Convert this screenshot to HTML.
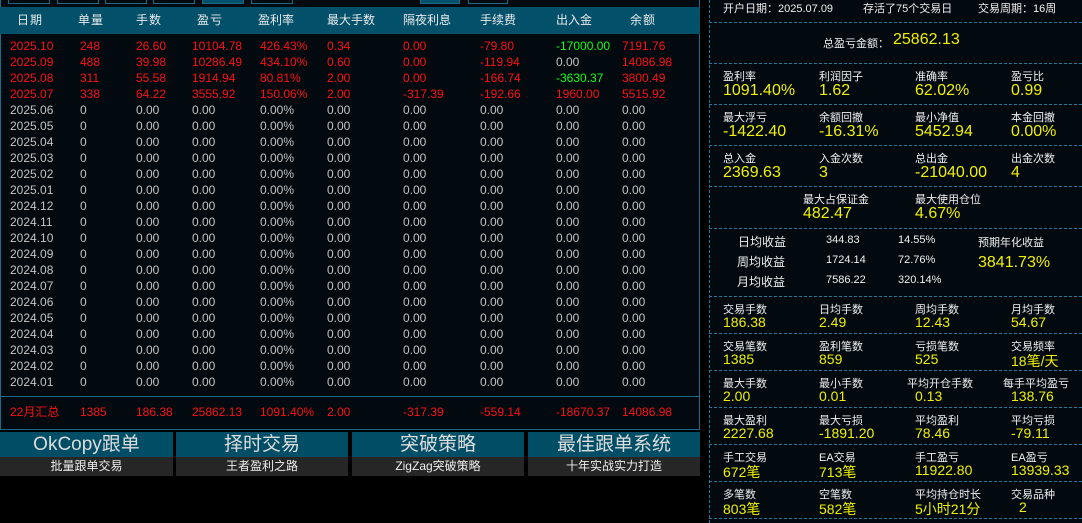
<!DOCTYPE html>
<html><head><meta charset="utf-8"><style>
*{margin:0;padding:0;box-sizing:border-box}
body{width:1082px;height:523px;background:#000;position:relative;overflow:hidden;font-family:"Liberation Sans","Noto Sans CJK SC",sans-serif;}
.a{position:absolute;white-space:nowrap}
#lp{position:absolute;left:0;top:0;width:700px;height:430px;background:#020a10;border:1px solid #1a6b88;border-top:none}
#hd{position:absolute;left:0;top:7px;width:700px;height:27px;background:#03506b}
.h{position:absolute;top:11px;font-size:12px;color:#eaeaea;letter-spacing:1px}
.r{position:absolute;font-size:12px;line-height:16px;height:16px;width:700px;left:0}
.r span{position:absolute;top:0}
.red{color:#ff1010}.gray{color:#c4c4c4}.grn{color:#10ff10}
.c1{left:10px}.c2{left:80px}.c3{left:136px}.c4{left:192px}.c5{left:260px}.c6{left:327px}.c7{left:403px}.c8{left:480px}.c9{left:556px}.c10{left:622px}
.btn{position:absolute;top:432px;width:173px;height:44px}
.bt{height:25px;background:#004d66;color:#ddd;font-size:19px;text-align:center;line-height:25px}
.bb{height:19px;background:#262626;color:#eee;font-size:12px;text-align:center;line-height:19px}
#rp{position:absolute;left:709px;top:0;width:373px;height:523px;background:#020a10;border-left:1px dashed #1d7a9a}
.dl{position:absolute;left:709px;width:373px;border-top:1px dashed #1d7a9a;height:0}
.lb{position:absolute;font-size:11px;color:#f0f0f0}
.vl{position:absolute;font-size:16px;color:#f0f000}
.sm{position:absolute;font-size:12px;color:#f0f0f0}
.bx{position:absolute;top:0;width:42px;height:4px;border:1px solid #1a6b88;border-top:none}
</style></head><body>
<div id="lp"></div>
<div class="bx" style="left:8px"></div>
<div class="bx" style="left:57px"></div>
<div class="bx" style="left:105px"></div>
<div class="bx" style="left:153px"></div>
<div class="bx" style="left:202px;background:#03506b"></div>
<div class="bx" style="left:251px"></div>
<div class="bx" style="left:420px;width:40px;background:#03506b"></div>
<div class="bx" style="left:468px;width:40px"></div>
<div id="hd"></div>
<div class="h" style="left:17px">日期</div><div class="h" style="left:78px">单量</div><div class="h" style="left:136px">手数</div><div class="h" style="left:197px">盈亏</div><div class="h" style="left:258px;letter-spacing:0">盈利率</div><div class="h" style="left:327px;letter-spacing:0">最大手数</div><div class="h" style="left:403px;letter-spacing:0">隔夜利息</div><div class="h" style="left:480px;letter-spacing:0">手续费</div><div class="h" style="left:556px;letter-spacing:0">出入金</div><div class="h" style="left:630px">余额</div>

<div class="r red" style="top:38px"><span class="c1">2025.10</span><span class="c2">248</span><span class="c3">26.60</span><span class="c4">10104.78</span><span class="c5">426.43%</span><span class="c6">0.34</span><span class="c7">0.00</span><span class="c8">-79.80</span><span class="c9 grn">-17000.00</span><span class="c10">7191.76</span></div>
<div class="r red" style="top:54px"><span class="c1">2025.09</span><span class="c2">488</span><span class="c3">39.98</span><span class="c4">10286.49</span><span class="c5">434.10%</span><span class="c6">0.60</span><span class="c7">0.00</span><span class="c8">-119.94</span><span class="c9 gray">0.00</span><span class="c10">14086.98</span></div>
<div class="r red" style="top:70px"><span class="c1">2025.08</span><span class="c2">311</span><span class="c3">55.58</span><span class="c4">1914.94</span><span class="c5">80.81%</span><span class="c6">2.00</span><span class="c7">0.00</span><span class="c8">-166.74</span><span class="c9 grn">-3630.37</span><span class="c10">3800.49</span></div>
<div class="r red" style="top:86px"><span class="c1">2025.07</span><span class="c2">338</span><span class="c3">64.22</span><span class="c4">3555.92</span><span class="c5">150.06%</span><span class="c6">2.00</span><span class="c7">-317.39</span><span class="c8">-192.66</span><span class="c9">1960.00</span><span class="c10">5515.92</span></div>
<div class="r gray" style="top:102px"><span class="c1">2025.06</span><span class="c2">0</span><span class="c3">0.00</span><span class="c4">0.00</span><span class="c5">0.00%</span><span class="c6">0.00</span><span class="c7">0.00</span><span class="c8">0.00</span><span class="c9">0.00</span><span class="c10">0.00</span></div>
<div class="r gray" style="top:118px"><span class="c1">2025.05</span><span class="c2">0</span><span class="c3">0.00</span><span class="c4">0.00</span><span class="c5">0.00%</span><span class="c6">0.00</span><span class="c7">0.00</span><span class="c8">0.00</span><span class="c9">0.00</span><span class="c10">0.00</span></div>
<div class="r gray" style="top:134px"><span class="c1">2025.04</span><span class="c2">0</span><span class="c3">0.00</span><span class="c4">0.00</span><span class="c5">0.00%</span><span class="c6">0.00</span><span class="c7">0.00</span><span class="c8">0.00</span><span class="c9">0.00</span><span class="c10">0.00</span></div>
<div class="r gray" style="top:150px"><span class="c1">2025.03</span><span class="c2">0</span><span class="c3">0.00</span><span class="c4">0.00</span><span class="c5">0.00%</span><span class="c6">0.00</span><span class="c7">0.00</span><span class="c8">0.00</span><span class="c9">0.00</span><span class="c10">0.00</span></div>
<div class="r gray" style="top:166px"><span class="c1">2025.02</span><span class="c2">0</span><span class="c3">0.00</span><span class="c4">0.00</span><span class="c5">0.00%</span><span class="c6">0.00</span><span class="c7">0.00</span><span class="c8">0.00</span><span class="c9">0.00</span><span class="c10">0.00</span></div>
<div class="r gray" style="top:182px"><span class="c1">2025.01</span><span class="c2">0</span><span class="c3">0.00</span><span class="c4">0.00</span><span class="c5">0.00%</span><span class="c6">0.00</span><span class="c7">0.00</span><span class="c8">0.00</span><span class="c9">0.00</span><span class="c10">0.00</span></div>
<div class="r gray" style="top:198px"><span class="c1">2024.12</span><span class="c2">0</span><span class="c3">0.00</span><span class="c4">0.00</span><span class="c5">0.00%</span><span class="c6">0.00</span><span class="c7">0.00</span><span class="c8">0.00</span><span class="c9">0.00</span><span class="c10">0.00</span></div>
<div class="r gray" style="top:214px"><span class="c1">2024.11</span><span class="c2">0</span><span class="c3">0.00</span><span class="c4">0.00</span><span class="c5">0.00%</span><span class="c6">0.00</span><span class="c7">0.00</span><span class="c8">0.00</span><span class="c9">0.00</span><span class="c10">0.00</span></div>
<div class="r gray" style="top:230px"><span class="c1">2024.10</span><span class="c2">0</span><span class="c3">0.00</span><span class="c4">0.00</span><span class="c5">0.00%</span><span class="c6">0.00</span><span class="c7">0.00</span><span class="c8">0.00</span><span class="c9">0.00</span><span class="c10">0.00</span></div>
<div class="r gray" style="top:246px"><span class="c1">2024.09</span><span class="c2">0</span><span class="c3">0.00</span><span class="c4">0.00</span><span class="c5">0.00%</span><span class="c6">0.00</span><span class="c7">0.00</span><span class="c8">0.00</span><span class="c9">0.00</span><span class="c10">0.00</span></div>
<div class="r gray" style="top:262px"><span class="c1">2024.08</span><span class="c2">0</span><span class="c3">0.00</span><span class="c4">0.00</span><span class="c5">0.00%</span><span class="c6">0.00</span><span class="c7">0.00</span><span class="c8">0.00</span><span class="c9">0.00</span><span class="c10">0.00</span></div>
<div class="r gray" style="top:278px"><span class="c1">2024.07</span><span class="c2">0</span><span class="c3">0.00</span><span class="c4">0.00</span><span class="c5">0.00%</span><span class="c6">0.00</span><span class="c7">0.00</span><span class="c8">0.00</span><span class="c9">0.00</span><span class="c10">0.00</span></div>
<div class="r gray" style="top:294px"><span class="c1">2024.06</span><span class="c2">0</span><span class="c3">0.00</span><span class="c4">0.00</span><span class="c5">0.00%</span><span class="c6">0.00</span><span class="c7">0.00</span><span class="c8">0.00</span><span class="c9">0.00</span><span class="c10">0.00</span></div>
<div class="r gray" style="top:310px"><span class="c1">2024.05</span><span class="c2">0</span><span class="c3">0.00</span><span class="c4">0.00</span><span class="c5">0.00%</span><span class="c6">0.00</span><span class="c7">0.00</span><span class="c8">0.00</span><span class="c9">0.00</span><span class="c10">0.00</span></div>
<div class="r gray" style="top:326px"><span class="c1">2024.04</span><span class="c2">0</span><span class="c3">0.00</span><span class="c4">0.00</span><span class="c5">0.00%</span><span class="c6">0.00</span><span class="c7">0.00</span><span class="c8">0.00</span><span class="c9">0.00</span><span class="c10">0.00</span></div>
<div class="r gray" style="top:342px"><span class="c1">2024.03</span><span class="c2">0</span><span class="c3">0.00</span><span class="c4">0.00</span><span class="c5">0.00%</span><span class="c6">0.00</span><span class="c7">0.00</span><span class="c8">0.00</span><span class="c9">0.00</span><span class="c10">0.00</span></div>
<div class="r gray" style="top:358px"><span class="c1">2024.02</span><span class="c2">0</span><span class="c3">0.00</span><span class="c4">0.00</span><span class="c5">0.00%</span><span class="c6">0.00</span><span class="c7">0.00</span><span class="c8">0.00</span><span class="c9">0.00</span><span class="c10">0.00</span></div>
<div class="r gray" style="top:374px"><span class="c1">2024.01</span><span class="c2">0</span><span class="c3">0.00</span><span class="c4">0.00</span><span class="c5">0.00%</span><span class="c6">0.00</span><span class="c7">0.00</span><span class="c8">0.00</span><span class="c9">0.00</span><span class="c10">0.00</span></div>
<div class="a" style="left:0;top:396px;width:700px;border-top:1px solid #1a6b88"></div>
<div class="r red" style="top:404px"><span class="c1">22月汇总</span><span class="c2">1385</span><span class="c3">186.38</span><span class="c4">25862.13</span><span class="c5">1091.40%</span><span class="c6">2.00</span><span class="c7">-317.39</span><span class="c8">-559.14</span><span class="c9">-18670.37</span><span class="c10">14086.98</span></div>

<div class="btn" style="left:0"><div class="bt">OkCopy跟单</div><div class="bb">批量跟单交易</div></div>
<div class="btn" style="left:176px;width:172px"><div class="bt">择时交易</div><div class="bb">王者盈利之路</div></div>
<div class="btn" style="left:352px;width:172px"><div class="bt">突破策略</div><div class="bb">ZigZag突破策略</div></div>
<div class="btn" style="left:528px;width:172px"><div class="bt">最佳跟单系统</div><div class="bb">十年实战实力打造</div></div>

<div id="rp"></div>
<div class="dl" style="top:22px"></div><div class="dl" style="top:63px"></div><div class="dl" style="top:104px"></div><div class="dl" style="top:145px"></div><div class="dl" style="top:186px"></div><div class="dl" style="top:228px"></div><div class="dl" style="top:296px"></div><div class="dl" style="top:333px"></div><div class="dl" style="top:370px"></div><div class="dl" style="top:407px"></div><div class="dl" style="top:444px"></div><div class="dl" style="top:481px"></div><div class="dl" style="top:518px"></div>

<div class="lb" style="left:723px;top:0px">开户日期：2025.07.09</div>
<div class="lb" style="left:863px;top:0px">存活了75个交易日</div>
<div class="lb" style="left:978px;top:0px">交易周期：16周</div>
<div class="lb" style="left:823px;top:35px">总盈亏金额：</div>
<div class="vl" style="left:893px;top:31px">25862.13</div>

<div class="lb" style="left:723px;top:68px">盈利率</div><div class="vl" style="left:723px;top:82px">1091.40%</div>
<div class="lb" style="left:819px;top:68px">利润因子</div><div class="vl" style="left:819px;top:82px">1.62</div>
<div class="lb" style="left:915px;top:68px">准确率</div><div class="vl" style="left:915px;top:82px">62.02%</div>
<div class="lb" style="left:1011px;top:68px">盈亏比</div><div class="vl" style="left:1011px;top:82px">0.99</div>

<div class="lb" style="left:723px;top:109px">最大浮亏</div><div class="vl" style="left:723px;top:123px">-1422.40</div>
<div class="lb" style="left:819px;top:109px">余额回撤</div><div class="vl" style="left:819px;top:123px">-16.31%</div>
<div class="lb" style="left:915px;top:109px">最小净值</div><div class="vl" style="left:915px;top:123px">5452.94</div>
<div class="lb" style="left:1011px;top:109px">本金回撤</div><div class="vl" style="left:1011px;top:123px">0.00%</div>

<div class="lb" style="left:723px;top:150px">总入金</div><div class="vl" style="left:723px;top:164px">2369.63</div>
<div class="lb" style="left:819px;top:150px">入金次数</div><div class="vl" style="left:819px;top:164px">3</div>
<div class="lb" style="left:915px;top:150px">总出金</div><div class="vl" style="left:915px;top:164px">-21040.00</div>
<div class="lb" style="left:1011px;top:150px">出金次数</div><div class="vl" style="left:1011px;top:164px">4</div>

<div class="lb" style="left:803px;top:191px">最大占保证金</div><div class="vl" style="left:803px;top:205px">482.47</div>
<div class="lb" style="left:915px;top:191px">最大使用仓位</div><div class="vl" style="left:915px;top:205px">4.67%</div>

<div class="sm" style="left:738px;top:233px">日均收益</div><div class="sm" style="left:826px;top:234px;font-size:11px">344.83</div><div class="sm" style="left:898px;top:234px;font-size:11px">14.55%</div>
<div class="sm" style="left:737px;top:253px">周均收益</div><div class="sm" style="left:826px;top:254px;font-size:11px">1724.14</div><div class="sm" style="left:898px;top:254px;font-size:11px">72.76%</div>
<div class="sm" style="left:737px;top:273px">月均收益</div><div class="sm" style="left:826px;top:274px;font-size:11px">7586.22</div><div class="sm" style="left:898px;top:274px;font-size:11px">320.14%</div>
<div class="lb" style="left:978px;top:234px">预期年化收益</div><div class="vl" style="left:978px;top:254px">3841.73%</div>

<div class="lb" style="left:723px;top:301px">交易手数</div><div class="vl" style="left:723px;top:314px;font-size:14px">186.38</div>
<div class="lb" style="left:819px;top:301px">日均手数</div><div class="vl" style="left:819px;top:314px;font-size:14px">2.49</div>
<div class="lb" style="left:915px;top:301px">周均手数</div><div class="vl" style="left:915px;top:314px;font-size:14px">12.43</div>
<div class="lb" style="left:1011px;top:301px">月均手数</div><div class="vl" style="left:1011px;top:314px;font-size:14px">54.67</div>

<div class="lb" style="left:723px;top:338px">交易笔数</div><div class="vl" style="left:723px;top:351px;font-size:14px">1385</div>
<div class="lb" style="left:819px;top:338px">盈利笔数</div><div class="vl" style="left:819px;top:351px;font-size:14px">859</div>
<div class="lb" style="left:915px;top:338px">亏损笔数</div><div class="vl" style="left:915px;top:351px;font-size:14px">525</div>
<div class="lb" style="left:1011px;top:338px">交易频率</div><div class="vl" style="left:1011px;top:351px;font-size:14px">18笔/天</div>

<div class="lb" style="left:723px;top:375px">最大手数</div><div class="vl" style="left:723px;top:388px;font-size:14px">2.00</div>
<div class="lb" style="left:819px;top:375px">最小手数</div><div class="vl" style="left:819px;top:388px;font-size:14px">0.01</div>
<div class="lb" style="left:907px;top:375px">平均开仓手数</div><div class="vl" style="left:915px;top:388px;font-size:14px">0.13</div>
<div class="lb" style="left:1003px;top:375px">每手平均盈亏</div><div class="vl" style="left:1011px;top:388px;font-size:14px">138.76</div>

<div class="lb" style="left:723px;top:412px">最大盈利</div><div class="vl" style="left:723px;top:425px;font-size:14px">2227.68</div>
<div class="lb" style="left:819px;top:412px">最大亏损</div><div class="vl" style="left:819px;top:425px;font-size:14px">-1891.20</div>
<div class="lb" style="left:915px;top:412px">平均盈利</div><div class="vl" style="left:915px;top:425px;font-size:14px">78.46</div>
<div class="lb" style="left:1011px;top:412px">平均亏损</div><div class="vl" style="left:1011px;top:425px;font-size:14px">-79.11</div>

<div class="lb" style="left:723px;top:449px">手工交易</div><div class="vl" style="left:723px;top:462px;font-size:14px">672笔</div>
<div class="lb" style="left:819px;top:449px">EA交易</div><div class="vl" style="left:819px;top:462px;font-size:14px">713笔</div>
<div class="lb" style="left:915px;top:449px">手工盈亏</div><div class="vl" style="left:915px;top:462px;font-size:14px">11922.80</div>
<div class="lb" style="left:1011px;top:449px">EA盈亏</div><div class="vl" style="left:1011px;top:462px;font-size:14px">13939.33</div>

<div class="lb" style="left:723px;top:486px">多笔数</div><div class="vl" style="left:723px;top:499px;font-size:14px">803笔</div>
<div class="lb" style="left:819px;top:486px">空笔数</div><div class="vl" style="left:819px;top:499px;font-size:14px">582笔</div>
<div class="lb" style="left:915px;top:486px">平均持仓时长</div><div class="vl" style="left:915px;top:499px;font-size:14px">5小时21分</div>
<div class="lb" style="left:1011px;top:486px">交易品种</div><div class="vl" style="left:1019px;top:499px;font-size:14px">2</div>
</body></html>
